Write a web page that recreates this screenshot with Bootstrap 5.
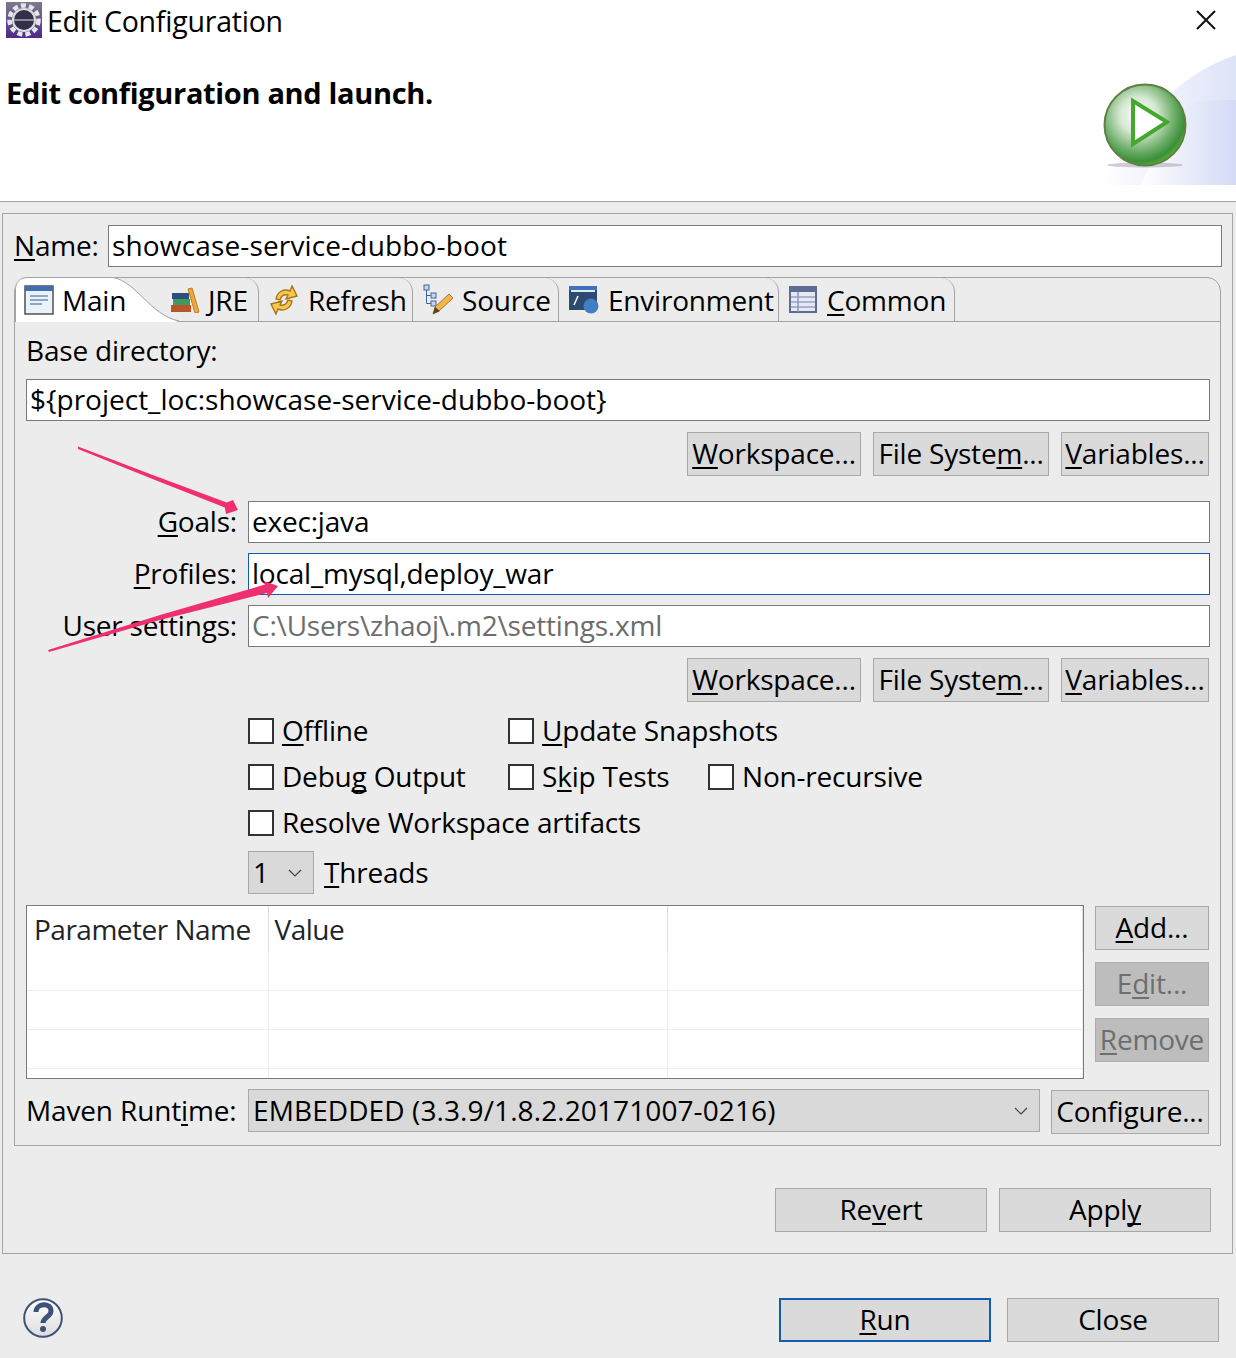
<!DOCTYPE html>
<html lang="en">
<head>
    <meta charset="UTF-8">
    <title>Edit Configuration</title>
    <link href="https://cdn.jsdelivr.net/npm/bootstrap@5.3.0/dist/css/bootstrap.min.css" rel="stylesheet">
    <style>
        html, body { margin: 0; background: #ececec; }
        body { font-family: "Open Sans", "Noto Sans", sans-serif; font-size: 28px; line-height: 36px; letter-spacing: -0.2px; color: #000; }
        u { text-decoration-thickness: 2px; text-underline-offset: 3px; text-decoration-skip-ink: none; }

        .page-wrap { width: 1236px; height: 1358px; overflow: hidden; position: relative; }
        .arrows-layer { position: absolute; left: 0; top: 0; pointer-events: none; z-index: 5; }

        .dlg-head { height: 202px; background: #fff; border-bottom: 1px solid #a3a3a3; }
        .title-row { height: 44px; padding: 2px 20px 0 6px; }
        .title-row span { margin-left: 5px; margin-top: 1px; letter-spacing: -0.22px; font-size: 28.5px; white-space: nowrap; }
        .head-row { margin-top: 11px; padding-left: 6px; }
        .head-text { font-weight: 700; font-size: 29px; margin-top: 20px; letter-spacing: -0.33px; }

        .outer-panel { margin: 11px 3px 0 2px; height: 1041px; border: 1px solid #a3a3a3; padding: 11px 0 0 11px; }
        .name-row { height: 42px; margin-right: 10px; }
        .name-row label { flex: none; width: 94px; margin: 0; padding-bottom: 3px; }
        .name-row .swt-input.form-control { letter-spacing: 0.15px; padding-bottom: 3px; }

        .swt-input.form-control { height: 42px; padding: 0 3px 2px; border: 1px solid #7a7a7a; border-radius: 0; background: #fff; font-size: 28px; line-height: 36px; letter-spacing: -0.2px; color: #000; box-shadow: none; }
        .swt-input.is-focus.form-control { border-color: #0f5cb0; }
        .swt-input.is-off.form-control { color: #6d6d6d; }
        .swt-input.mt-base.form-control { letter-spacing: 0; }

        .tab-folder { margin: 10px 11px 0 0; height: 869px; border: 1px solid #a3a3a3; border-radius: 14px 14px 0 0; }
        .tab-strip { height: 44px; border-bottom: 1px solid #a3a3a3; position: relative; }
        .tab-item { height: 43px; gap: 9px; padding-left: 10px; border-right: 1px solid #a3a3a3; border-top-right-radius: 14px; white-space: nowrap; }
        .tab-main { width: 148px; height: 44px; padding-left: 9px; border: 0; gap: 8px; position: relative; }
        .tab-main .tab-shape { position: absolute; left: 0; top: -1px; }
        .tab-main svg.tab-ico, .tab-main span { position: relative; }
        .tab-jre { width: 96px; padding-left: 7px; gap: 8px; }
        .tab-refresh { width: 154px; }
        .tab-source { width: 146px; }
        .tab-env { width: 220px; }
        .tab-common { width: 176px; gap: 10px; }

        .tab-body { padding: 11px 10px 0 11px; }
        .row-label { height: 36px; margin-top: -1px; }
        .mt-base { margin-top: 11px; }
        .btn-row { margin-top: 11px; gap: 12px; padding-right: 1px; }

        .swt-btn.btn { height: 44px; padding: 0 0 2px; border: 1px solid #a8a8a8; border-radius: 0; background: #dadada; color: #000; font-size: 28px; line-height: 36px; letter-spacing: -0.2px; white-space: nowrap; }
        .swt-btn.btn:disabled { background: #bdbdbd; border-color: #adadad; color: #6e6e6e; opacity: 1; }
        .swt-btn.btn-focus { border: 2px solid #0f5cb0; }
        .w-workspace { width: 174px; }
        .w-filesys { width: 176px; }
        .w-vars { width: 148px; }

        .goal-rows { margin-top: 25px; gap: 10px; }
        .goal-rows label { flex: none; width: 211px; margin: 0 11px 0 0; padding-bottom: 2px; text-align: right; }

        .check-rows { margin-top: 16px; margin-left: 222px; gap: 20px; }
        .check-line { height: 26px; }
        .check-line span { margin-top: -2px; }
        .check-item { gap: 8px; }
        .check-a { width: 260px; }
        .check-b { width: 200px; }
        .swt-check.form-check-input { width: 26px; height: 26px; margin: 0; border: 2px solid #333; border-radius: 0; background-color: #fff; flex: none; }

        .swt-combo.form-select { border: 1px solid #a8a8a8; border-radius: 0; background-color: #d9d9d9; color: #000; font-size: 28px; line-height: 36px; letter-spacing: 0.1px; padding: 0 0 2px 4px; box-shadow: none;
            background-image: url("data:image/svg+xml,%3csvg xmlns='http://www.w3.org/2000/svg' viewBox='0 0 14 8'%3e%3cpath fill='none' stroke='%23444' stroke-width='1.2' d='M1 1l6 6 6-6'/%3e%3c/svg%3e");
            background-size: 14px 8px; background-position: right 11px center; }
        .thread-row { margin: 15px 0 0 222px; gap: 10px; height: 43px; }
        .thread-row span { margin-top: -2px; }
        .combo-threads { width: 66px; height: 43px; }

        .param-row { margin-top: 11px; height: 174px; gap: 11px; }
        .param-box { width: 1058px; height: 174px; border: 1px solid #7a7a7a; background: #fff; overflow: hidden; }
        .param-table.table { width: 1056px; table-layout: fixed; margin: 0; --bs-table-bg: transparent; }
        .param-table th, .param-table td { padding: 0; border-bottom: 1px solid #eeeef2; border-right: 1px solid #eeeef2; box-shadow: none; }
        .param-table th { height: 46px; padding-left: 7px; font-weight: 400; letter-spacing: -0.5px; border-bottom: 0; border-right-color: #dcdce0; vertical-align: middle; }
        .param-table th + th { padding-left: 6px; }
        .param-table .row-first td { height: 38px; }
        .param-table .row-next td { height: 39px; }
        .param-table .row-cut td { height: 10px; border-bottom: 0; }
        .side-btns { margin-top: 1px; gap: 12px; width: 114px; }

        .runtime-row { margin-top: 10px; gap: 11px; }
        .runtime-row label { flex: none; width: 211px; height: 43px; margin: 0; padding-bottom: 2px; letter-spacing: -0.15px; white-space: nowrap; }
        .combo-runtime { flex: none; width: 792px; height: 43px; }
        .w-config { flex: none; width: 158px; margin-top: 1px; }

        .apply-row { margin-top: 42px; gap: 12px; padding-right: 21px; }
        .w-wide { width: 212px; }
        .foot-row { margin-top: 44px; padding: 0 17px 0 23px; gap: 16px; }
        .help-ico { margin-top: -4px; }
    </style>
</head>
<body>
<div class="page-wrap">

    <svg class="arrows-layer" width="1236" height="1358">
        <polygon fill="#f0306e" points="78,446.5 150,474 226.7,502.5 233,500 238,510 226,514 224.8,507.5 150,478 78,449"/>
        <polygon fill="#f0306e" points="48,650 160,615 265,584.6 264,581 278,586 268,598 267,593 160,620 49,652"/>
    </svg>

    <div class="dlg-head">
        <div class="title-row d-flex align-items-start justify-content-between">
            <div class="d-flex align-items-start">
                <svg width="36" height="36" viewBox="0 0 36 36">
                    <defs><linearGradient id="purpleBg" x1="0" y1="0" x2="0" y2="1"><stop offset="0" stop-color="#7f7a8c"/><stop offset="1" stop-color="#4d2a8a"/></linearGradient></defs>
                    <rect width="36" height="36" fill="url(#purpleBg)"/>
                    <circle cx="18" cy="18" r="14.5" fill="none" stroke="#e6e6e6" stroke-width="4.5" stroke-dasharray="5 3.1"/>
                    <circle cx="18" cy="18" r="12" fill="#dedede"/>
                    <circle cx="18" cy="18" r="10" fill="#35304a"/>
                    <rect x="8" y="17" width="20" height="2" fill="#8d88a0"/>
                </svg>
                <span>Edit Configuration</span>
            </div>
            <svg class="mt-2" width="20" height="20" viewBox="0 0 20 20"><path d="M1 1l18 18M19 1L1 19" stroke="#111" stroke-width="2" fill="none"/></svg>
        </div>
        <div class="head-row d-flex justify-content-between">
            <div class="head-text">Edit configuration and launch.</div>
            <svg width="136" height="130" viewBox="0 0 136 130">
                <defs>
                    <linearGradient id="bannerFill" x1="0" y1="0" x2="1" y2="0"><stop offset="0" stop-color="#fff"/><stop offset=".55" stop-color="#e6eafa"/><stop offset="1" stop-color="#d3dbf5"/></linearGradient>
                    <radialGradient id="ballFill" cx=".42" cy=".38" r=".65"><stop offset="0" stop-color="#fff"/><stop offset=".35" stop-color="#d5e8d2"/><stop offset=".68" stop-color="#6fae6a"/><stop offset=".88" stop-color="#3c8f3a"/><stop offset="1" stop-color="#57b62e"/></radialGradient>
                </defs>
                <path d="M0 130 L72 38 C88 22 112 8 136 0 V130 Z" fill="url(#bannerFill)" opacity=".75"/>
                <path d="M40 130 L84 50 C100 46 118 45 136 45 V130 Z" fill="url(#bannerFill)"/>
                <ellipse cx="45" cy="110" rx="38" ry="2.5" fill="#a79aa8" opacity=".5"/>
                <circle cx="45" cy="70" r="40.5" fill="url(#ballFill)" stroke="#5f8040" stroke-width="2"/>
                <polygon points="33,46 67,67 33,89" fill="#fff" stroke="#45a82e" stroke-width="4"/>
            </svg>
        </div>
    </div>

    <div class="outer-panel">
        <div class="name-row d-flex align-items-center">
            <label><u>N</u>ame:</label>
            <input class="swt-input form-control" type="text" value="showcase-service-dubbo-boot">
        </div>

        <div class="tab-folder">
            <div class="tab-strip d-flex">
                <div class="tab-item tab-main d-flex align-items-center">
                    <svg class="tab-shape" width="164" height="46" viewBox="0 0 164 46">
                        <path d="M0 45V13C0 5 5 .5 13 .5H98C122 5 135 38 164 45Z" fill="#fff"/>
                        <path d="M.5 45V13C.5 5 5 .5 13 .5H98C122 5 135 38 164 44" fill="none" stroke="#a3a3a3"/>
                    </svg>
                    <svg class="tab-ico" width="30" height="30" viewBox="0 0 30 30">
                        <rect x="1" y="1" width="28" height="28" fill="#eaf3fb" stroke="#55504a" stroke-width="1.5"/>
                        <rect x="1" y="1" width="28" height="5" fill="#3f6fae"/>
                        <path d="M6 11h18M6 15h18M6 19h12" stroke="#6f8fb8" stroke-width="1.5"/>
                    </svg>
                    <span>Main</span>
                </div>
                <div class="tab-item tab-jre d-flex align-items-center">
                    <svg width="30" height="26" viewBox="0 0 30 26">
                        <rect x="1" y="18" width="20" height="7" fill="#b8562a"/>
                        <rect x="3" y="12" width="17" height="6" fill="#3f9a5c"/>
                        <rect x="2" y="6" width="17" height="6" fill="#2d4f7e"/>
                        <path d="M18 2l4-1 7 24-4 1z" fill="#eda93a" stroke="#c07a1c"/>
                    </svg>
                    <span>JRE</span>
                </div>
                <div class="tab-item tab-refresh d-flex align-items-center">
                    <svg width="30" height="32" viewBox="0 0 30 32">
                        <path d="M7 15C8 8 15 4 21 7l2-5 5 10-11 3 2-4c-4-1-7 1-8 5z" fill="#f7c84e" stroke="#a8741a" stroke-width="1.4"/>
                        <path d="M23 17c-1 7-8 11-14 8l-2 5-5-10 11-3-2 4c4 1 7-1 8-5z" fill="#f7c84e" stroke="#a8741a" stroke-width="1.4"/>
                    </svg>
                    <span>Refresh</span>
                </div>
                <div class="tab-item tab-source d-flex align-items-center">
                    <svg width="30" height="32" viewBox="0 0 30 32">
                        <rect x="1" y="1" width="5" height="5" fill="#c9d6ea" stroke="#41659a"/>
                        <rect x="8" y="9" width="5" height="5" fill="#c9d6ea" stroke="#41659a"/>
                        <rect x="8" y="17" width="5" height="5" fill="#c9d6ea" stroke="#41659a"/>
                        <path d="M3.5 6v13.5H8M3.5 11.5H8" fill="none" stroke="#41659a"/>
                        <path d="M10 30l2-7 14-13 4 4-14 13z" fill="#f2b64c" stroke="#a9762a"/>
                        <path d="M10 30l2-7 5 4z" fill="#57422c"/>
                    </svg>
                    <span>Source</span>
                </div>
                <div class="tab-item tab-env d-flex align-items-center">
                    <svg width="30" height="28" viewBox="0 0 30 28">
                        <rect x="0" y="0" width="28" height="24" fill="#2f4a70"/>
                        <rect x="0" y="0" width="28" height="4" fill="#3d72b8"/>
                        <rect x="2" y="4" width="24" height="2" fill="#dfe8f5"/>
                        <path d="M5 19l4-9" stroke="#fff" stroke-width="1.5"/>
                        <circle cx="22" cy="20" r="7.5" fill="#3f7fc4"/>
                    </svg>
                    <span>Environment</span>
                </div>
                <div class="tab-item tab-common d-flex align-items-center">
                    <svg width="28" height="27" viewBox="0 0 28 27">
                        <rect x="1" y="1" width="26" height="25" fill="#e6e9f3" stroke="#5e6c92" stroke-width="2"/>
                        <rect x="1" y="1" width="26" height="5" fill="#5e6c92"/>
                        <path d="M2 11h24M2 16h24M2 21h24" stroke="#aab4d2" stroke-width="2"/>
                        <path d="M9 6v20" stroke="#8a96b8" stroke-width="1.5"/>
                    </svg>
                    <span><u>C</u>ommon</span>
                </div>
            </div>

            <div class="tab-body">
                <div class="row-label">Base directory:</div>
                <input class="swt-input form-control mt-base" type="text" value="${project_loc:showcase-service-dubbo-boot}">
                <div class="btn-row d-flex justify-content-end">
                    <button class="swt-btn btn w-workspace"><u>W</u>orkspace...</button>
                    <button class="swt-btn btn w-filesys">File Syste<u>m</u>...</button>
                    <button class="swt-btn btn w-vars"><u>V</u>ariables...</button>
                </div>

                <div class="goal-rows d-flex flex-column">
                    <div class="d-flex align-items-center"><label><u>G</u>oals:</label><input class="swt-input form-control" type="text" value="exec:java"></div>
                    <div class="d-flex align-items-center"><label><u>P</u>rofiles:</label><input class="swt-input is-focus form-control" type="text" value="local_mysql,deploy_war"></div>
                    <div class="d-flex align-items-center"><label>User settings:</label><input class="swt-input is-off form-control" type="text" value="C:\Users\zhaoj\.m2\settings.xml"></div>
                </div>
                <div class="btn-row d-flex justify-content-end">
                    <button class="swt-btn btn w-workspace"><u>W</u>orkspace...</button>
                    <button class="swt-btn btn w-filesys">File Syste<u>m</u>...</button>
                    <button class="swt-btn btn w-vars"><u>V</u>ariables...</button>
                </div>

                <div class="check-rows d-flex flex-column">
                    <div class="check-line d-flex align-items-center">
                        <div class="check-item check-a d-flex align-items-center"><input class="swt-check form-check-input" type="checkbox"><span><u>O</u>ffline</span></div>
                        <div class="check-item d-flex align-items-center"><input class="swt-check form-check-input" type="checkbox"><span><u>U</u>pdate Snapshots</span></div>
                    </div>
                    <div class="check-line d-flex align-items-center">
                        <div class="check-item check-a d-flex align-items-center"><input class="swt-check form-check-input" type="checkbox"><span>Debu<u>g</u> Output</span></div>
                        <div class="check-item check-b d-flex align-items-center"><input class="swt-check form-check-input" type="checkbox"><span>S<u>k</u>ip Tests</span></div>
                        <div class="check-item d-flex align-items-center"><input class="swt-check form-check-input" type="checkbox"><span>Non-recursive</span></div>
                    </div>
                    <div class="check-line d-flex align-items-center">
                        <div class="check-item d-flex align-items-center"><input class="swt-check form-check-input" type="checkbox"><span>Resolve Workspace artifacts</span></div>
                    </div>
                </div>

                <div class="thread-row d-flex align-items-center">
                    <select class="swt-combo combo-threads form-select"><option>1</option></select>
                    <span><u>T</u>hreads</span>
                </div>

                <div class="param-row d-flex align-items-start">
                    <div class="param-box">
                        <table class="param-table table">
                            <colgroup><col style="width:241px"><col style="width:399px"><col></colgroup>
                            <thead><tr><th>Parameter Name</th><th>Value</th><th></th></tr></thead>
                            <tbody>
                                <tr class="row-first"><td></td><td></td><td></td></tr>
                                <tr class="row-next"><td></td><td></td><td></td></tr>
                                <tr class="row-next"><td></td><td></td><td></td></tr>
                                <tr class="row-cut"><td></td><td></td><td></td></tr>
                            </tbody>
                        </table>
                    </div>
                    <div class="side-btns d-flex flex-column">
                        <button class="swt-btn btn"><u>A</u>dd...</button>
                        <button class="swt-btn btn" disabled>E<u>d</u>it...</button>
                        <button class="swt-btn btn" disabled><u>R</u>emove</button>
                    </div>
                </div>

                <div class="runtime-row d-flex align-items-start">
                    <label class="d-flex align-items-center">Maven Runt<u>i</u>me:</label>
                    <select class="swt-combo combo-runtime form-select"><option>EMBEDDED (3.3.9/1.8.2.20171007-0216)</option></select>
                    <button class="swt-btn btn w-config">Configure...</button>
                </div>
            </div>
        </div>

        <div class="apply-row d-flex justify-content-end">
            <button class="swt-btn btn w-wide">Re<u>v</u>ert</button>
            <button class="swt-btn btn w-wide">Appl<u>y</u></button>
        </div>
    </div>

    <div class="foot-row d-flex align-items-center">
        <svg class="help-ico me-auto" width="40" height="40" viewBox="0 0 40 40">
            <defs><linearGradient id="helpFill" x1="0" y1="0" x2="0" y2="1"><stop offset="0" stop-color="#fff"/><stop offset="1" stop-color="#dcdcdc"/></linearGradient></defs>
            <circle cx="20" cy="20" r="18.8" fill="url(#helpFill)" stroke="#3e5178" stroke-width="2"/>
            <path d="M13 14c0-9 15-10 15-1 0 6-8 6-8 12" fill="none" stroke="#3e5178" stroke-width="5"/>
            <circle cx="20" cy="31" r="3" fill="#3e5178"/>
        </svg>
        <button class="swt-btn btn btn-focus w-wide"><u>R</u>un</button>
        <button class="swt-btn btn w-wide">Close</button>
    </div>
</div>
</body>
</html>
